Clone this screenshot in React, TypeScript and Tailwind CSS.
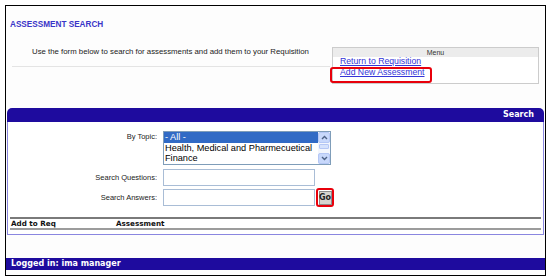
const arial = { fontFamily: '"Liberation Sans", Arial, sans-serif' };
const verdana = { fontFamily: '"DejaVu Sans", Verdana, sans-serif' };

function Chevron({ up }: { up?: boolean }) {
  return (
    <svg width="7" height="5" viewBox="0 0 7 5">
      <path
        d={up ? "M1 4 L3.5 1.5 L6 4" : "M1 1 L3.5 3.5 L6 1"}
        fill="none"
        stroke="#4d6185"
        strokeWidth="1.4"
      />
    </svg>
  );
}

function TopicList() {
  const topics = ["- All -", "Health, Medical and Pharmecuetical", "Finance"];
  return (
    <div className="flex h-[34px] w-[168px] border border-[#7f9db9] bg-white">
      <div className="flex-1 overflow-hidden text-[9.2px] leading-[10.7px] text-black" style={arial}>
        {topics.map((t, i) => (
          <div
            key={t}
            className={i === 0 ? "bg-[#316ac5] pl-[1px] text-white" : "pl-[1px] whitespace-nowrap"}
          >
            {t}
          </div>
        ))}
      </div>
      <div className="flex w-[12px] flex-col bg-[#f3f6fd]">
        <div className="flex h-[11px] items-center justify-center rounded-[2px] border border-[#b5c7f5] bg-[#c8d8fb]">
          <Chevron up />
        </div>
        <div className="flex-1 px-[1px] py-[1px]">
          <div className="h-[5px] rounded-[1px] border border-[#b5c7f5] bg-[#d6e2fc]" />
        </div>
        <div className="flex h-[11px] items-center justify-center rounded-[2px] border border-[#b5c7f5] bg-[#c8d8fb]">
          <Chevron />
        </div>
      </div>
    </div>
  );
}

export default function App() {
  return (
    <div className="h-[280px] w-[550px] bg-white p-[5px]">
      <div className="flex h-[271px] w-[541px] flex-col border border-black bg-[#fdfdfd]">
        <div
          className="pl-[4px] pt-[14px] text-[8.2px] font-bold leading-[10px] text-[#3a35c8]"
          style={arial}
        >
          ASSESSMENT SEARCH
        </div>

        <div className="mt-[17px] flex items-start">
          <div className="ml-[6px] h-[20px] w-[318px] border-b border-[#e4e4e4] pl-[20px]">
            <div className="text-[7.8px] leading-[10px] text-[#222]" style={arial}>
              Use the form below to search for assessments and add them to your Requisition
            </div>
          </div>
          <div className="relative ml-[2px] h-[37px] w-[207px] border border-[#cccccc] bg-white">
            <div
              className="h-[9px] bg-[#ececec] text-center text-[7px] leading-[9px] text-[#333]"
              style={arial}
            >
              Menu
            </div>
            <div className="pl-[7px] text-[8.7px] leading-[11px] text-[#3434d8] underline" style={arial}>
              <div className="-mt-[1px]">Return to Requisition</div>
              <div>Add New Assessment</div>
            </div>
            <div className="absolute left-[-3px] top-[19px] h-[16px] w-[102px] rounded-[3px] border-2 border-[#e8000b]" />
          </div>
        </div>

        <div className="mx-[1px] mt-[24px]">
          <div
            className="flex h-[14px] items-center justify-end rounded-t-[5px] bg-[#1e0b9e] pr-[10px] text-[8px] font-bold text-white"
            style={verdana}
          >
            Search
          </div>
          <div className="h-[113px] border border-t-0 border-[#8a86e0] bg-white pt-[9px]">
            <div className="grid grid-cols-[149px_auto] gap-x-[6px] gap-y-[4px] text-[7.5px] text-[#222]" style={arial}>
              <div className="pt-[1px] text-right leading-[9px]">By Topic:</div>
              <TopicList />

              <div className="flex h-[17px] items-center justify-end">Search Questions:</div>
              <div className="h-[17px] w-[152px] border border-[#a9bdd6] bg-white" />

              <div className="-mt-[1px] flex h-[17px] items-center justify-end">Search Answers:</div>
              <div className="-mt-[1px] flex items-start">
                <div className="h-[17px] w-[152px] border border-[#a9bdd6] bg-white" />
                <div className="-mt-[1px] ml-[1px] flex h-[19px] w-[18px] items-center justify-center rounded-[3px] border-2 border-[#e8000b]">
                  <div
                    className="flex h-[14px] w-[13px] items-center justify-center border border-[#8c8c8c] bg-[#d6d3ce] text-[8px] font-bold text-[#222]"
                    style={verdana}
                  >
                    Go
                  </div>
                </div>
              </div>
            </div>

            <div className="mx-[2px] mt-[10px] border-y-2 border-t-[#7a7a7a] border-b-[#9c9c9c]">
              <div
                className="flex h-[9px] items-center text-[7.2px] font-bold leading-[9px] text-[#111]"
                style={verdana}
              >
                <span className="w-[106px] pl-[1px]">Add to Req</span>
                <span>Assessment</span>
              </div>
            </div>
          </div>
        </div>

        <div
          className="mt-[23px] flex h-[12px] items-center bg-[#1e0b9e] pl-[5px] text-[8px] font-bold text-white"
          style={verdana}
        >
          Logged in: ima manager
        </div>
      </div>
    </div>
  );
}
